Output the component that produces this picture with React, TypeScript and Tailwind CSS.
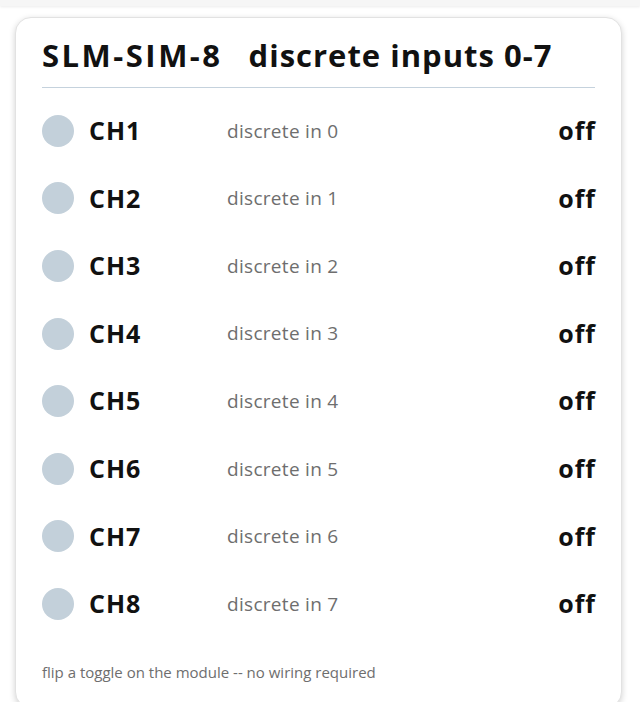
import React from "react";

const channels = [0, 1, 2, 3, 4, 5, 6, 7].map((i) => ({
  name: `CH${i + 1}`,
  label: `discrete in ${i}`,
  on: false,
}));

export default function App() {
  return (
    <div
      className="min-h-screen bg-white"
      style={{ fontFamily: '"Open Sans", "Noto Sans", sans-serif' }}
    >
      <div className="h-[6px] bg-[#f6f6f6] shadow-[0_1px_3px_rgba(0,0,0,0.08)]" />
      <div className="px-[15px] pt-[11px]">
        <div className="w-[607px] rounded-[16px] border border-[#e2e2e2] bg-white px-[26px] pt-[17px] pb-[24px] shadow-[0_2px_6px_rgba(0,0,0,0.18)]">
          <h1 className="flex gap-[26px] border-b border-[#c5d2dd] pb-[12px] text-[31px] font-bold leading-[40px] text-[#111]">
            <span className="tracking-[2.5px]">SLM-SIM-8</span>
            <span className="tracking-[1px]">discrete inputs 0-7</span>
          </h1>
          <ul className="mt-[9px]">
            {channels.map((ch) => (
              <li key={ch.name} className="flex h-[67.6px] items-center">
                <span
                  className={
                    ch.on
                      ? "h-[32px] w-[32px] rounded-full bg-[#3cb371]"
                      : "h-[32px] w-[32px] rounded-full bg-[#c3d0da]"
                  }
                />
                <span className="ml-[15px] w-[138px] text-[25px] font-bold tracking-[1px] text-[#111]">
                  {ch.name}
                </span>
                <span className="flex-1 text-[19px] tracking-[0.3px] text-[#6e6e6e]">
                  {ch.label}
                </span>
                <span className="mr-[-1px] text-[25px] font-bold tracking-[1px] text-[#111]">
                  {ch.on ? "on" : "off"}
                </span>
              </li>
            ))}
          </ul>
          <p className="mt-[23px] text-[15px] text-[#6e6e6e]">
            flip a toggle on the module -- no wiring required
          </p>
        </div>
      </div>
    </div>
  );
}
